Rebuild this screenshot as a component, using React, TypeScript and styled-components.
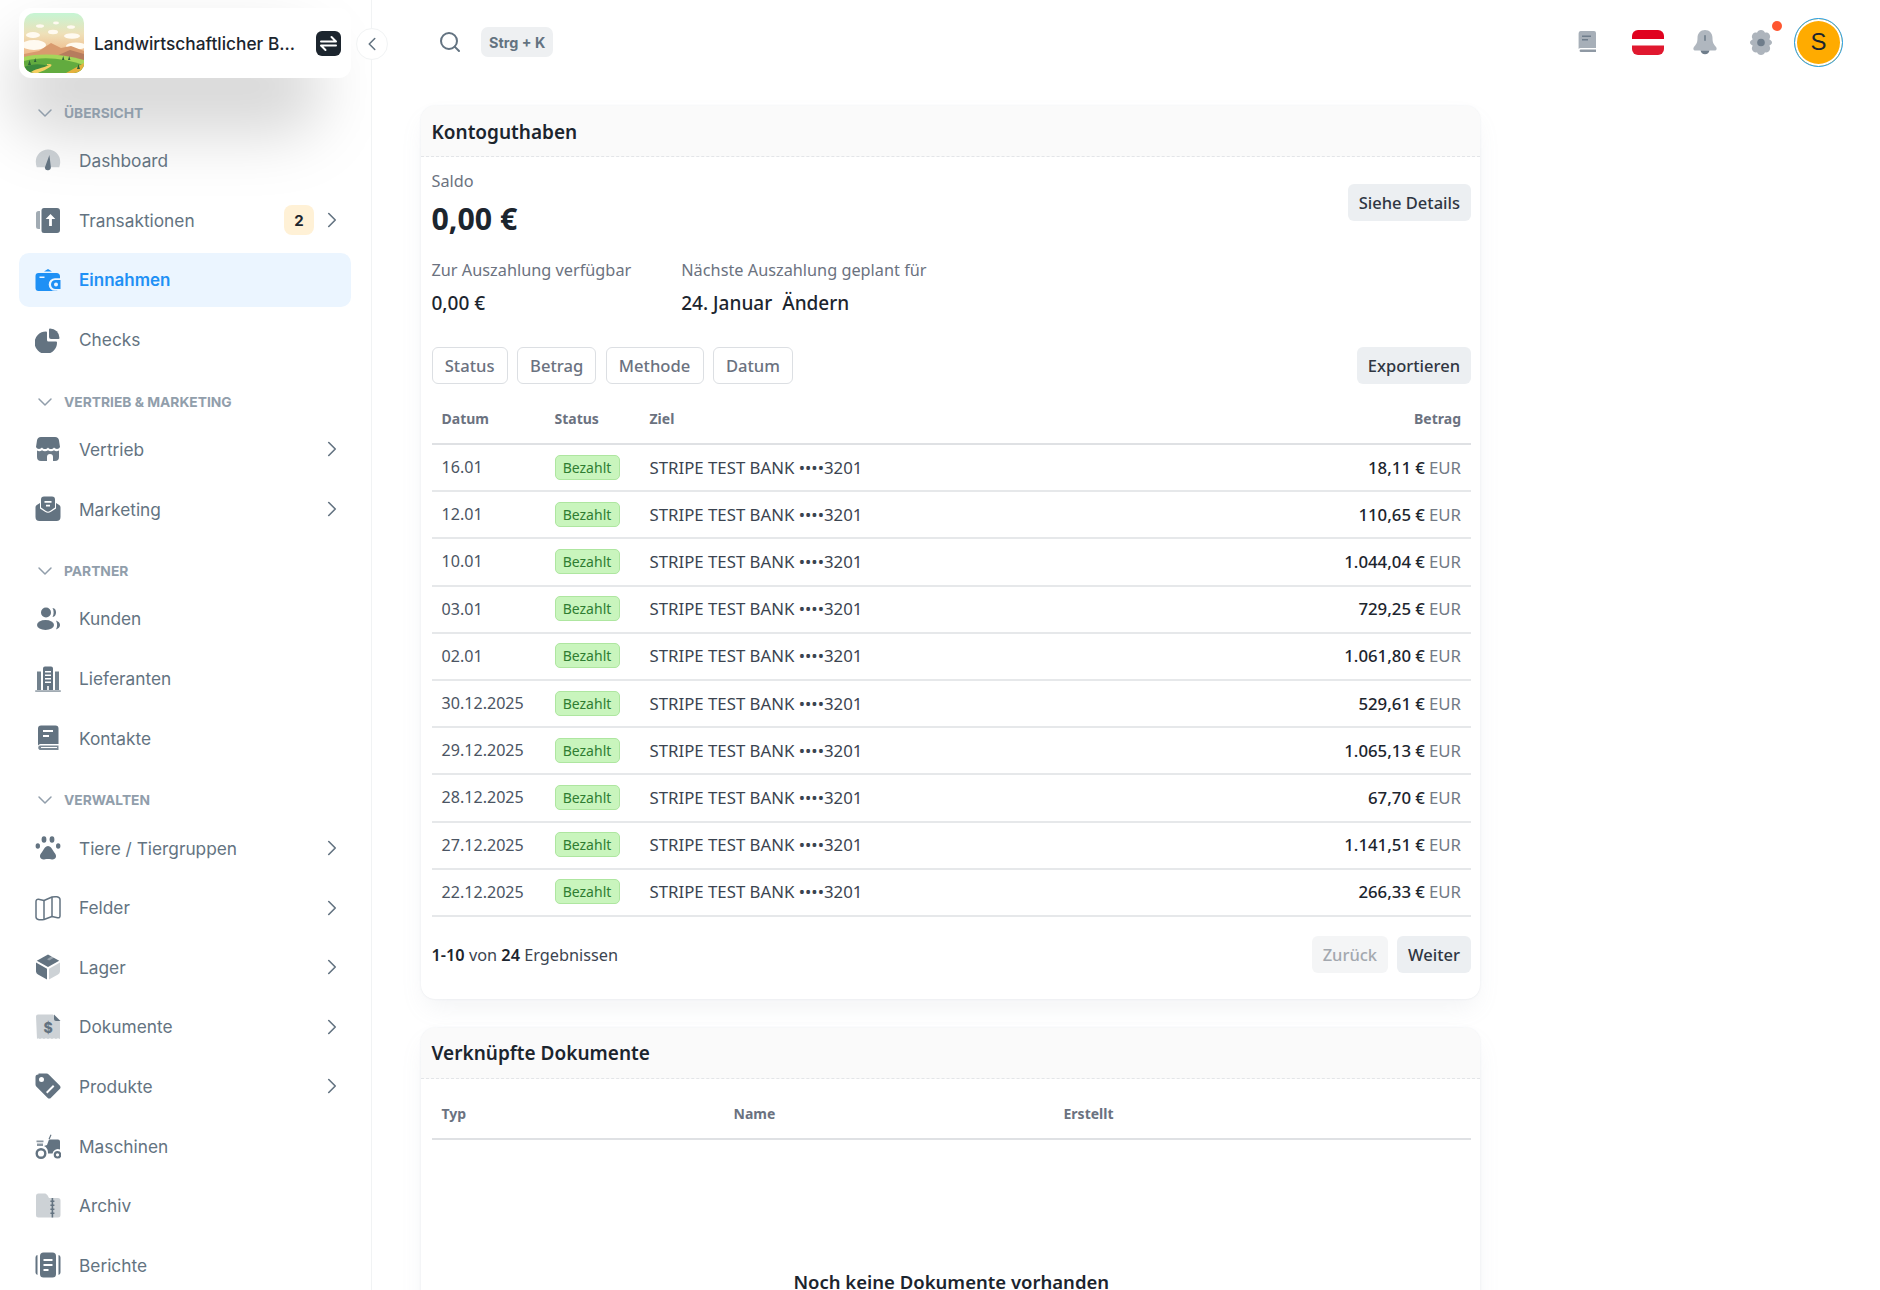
import styled, { createGlobalStyle } from 'styled-components';
import { ChevronDown, ChevronLeft, ChevronRight, Search } from 'lucide-react';
import type { ReactNode } from 'react';

const GlobalStyle = createGlobalStyle`
  html, body {
    margin: 0;
    height: 1290px;
    overflow: hidden;
    background: #fff;
    font-family: "Noto Sans", "Open Sans", sans-serif;
  }
  * { box-sizing: border-box; }
`;

const Shell = styled.div`
  display: flex;
  width: 1880px;
  height: 1290px;
  overflow: hidden;
`;

/* ---------- sidebar ---------- */

const Sidebar = styled.aside`
  position: relative;
  flex: 0 0 372px;
  height: 1290px;
  padding: 8px 20px 0 19px;
  border-right: 1px solid #f1f3f4;
  font-family: Inter, "Noto Sans", sans-serif;
`;
const SidebarClip = styled.div`
  position: absolute;
  inset: 0;
  overflow: hidden;
  pointer-events: none;
`;
const ShadowBlob = styled.div`
  position: absolute;
  left: 12px;
  top: 36px;
  width: 310px;
  height: 100px;
  border-radius: 40px;
  background: rgba(0, 0, 0, 0.15);
  filter: blur(30px);
`;
const BrandCard = styled.div`
  position: relative;
  display: flex;
  align-items: center;
  height: 70px;
  padding: 0 10px 0 5px;
  background: #fff;
  border-radius: 12px;
`;
const BrandName = styled.span`
  flex: 1;
  margin-left: 10px;
  font-size: 17.3px;
  font-weight: 500;
  color: #1c252e;
  white-space: nowrap;
`;
const SwitchButton = styled.span`
  display: flex;
  align-items: center;
  justify-content: center;
  width: 25px;
  height: 25px;
  background: #1c252e;
  border-radius: 6px;
`;
const CollapseButton = styled.button`
  position: absolute;
  left: 356px;
  top: 28px;
  width: 32px;
  height: 32px;
  padding: 0;
  display: flex;
  align-items: center;
  justify-content: center;
  background: #fff;
  border: 1px solid #f1f3f4;
  border-radius: 50%;
  color: #637381;
`;
const NavGroups = styled.nav`
  position: relative;
  display: flex;
  flex-direction: column;
  padding-top: 25px;
`;
const SectionLabel = styled.div`
  display: flex;
  align-items: center;
  height: 20px;
  margin: 0 0 11px 0;
  padding-left: 14px;
  font-size: 13.8px;
  font-weight: 700;
  text-transform: uppercase;
  color: #919eab;
  svg { margin-right: 7px; }
  &:not(:first-child) { margin-top: 19.3px; }
`;
const NavItem = styled.a<{ $active?: boolean }>`
  display: flex;
  align-items: center;
  height: 53.6px;
  margin-bottom: 6px;
  padding: 0 6.5px 0 16px;
  border-radius: 10px;
  font-size: ${(p) => (p.$active ? '17px' : '17.3px')};
  font-weight: ${(p) => (p.$active ? 600 : 400)};
  color: ${(p) => (p.$active ? '#1e90f5' : '#637381')};
  background: ${(p) => (p.$active ? '#ebf5ff' : 'transparent')};
`;
const NavIcon = styled.span`
  display: flex;
  flex: 0 0 26px;
  width: 26px;
  height: 26px;
  margin-right: 18px;
  svg { width: 26px; height: 26px; display: block; }
`;
const NavText = styled.span`
  flex: 1;
`;
const CountBadge = styled.span`
  display: flex;
  align-items: center;
  justify-content: center;
  width: 30px;
  height: 30px;
  margin-right: 4.5px;
  border-radius: 8px;
  background: #fff1d6;
  color: #1c252e;
  font-size: 15px;
  font-weight: 700;
`;

/* ---------- main area ---------- */

const Main = styled.main`
  flex: 1;
  min-width: 0;
`;
const TopBar = styled.header`
  display: flex;
  align-items: center;
  height: 84px;
  padding: 0 37px 0 66px;
`;
const SearchIcon = styled(Search)`
  color: #637381;
`;
const ShortcutKey = styled.span`
  margin-left: 19px;
  display: flex;
  align-items: center;
  height: 30px;
  padding: 0 8px;
  border-radius: 7px;
  background: #eef0f2;
  color: #637381;
  font-family: Inter, sans-serif;
  font-size: 14.4px;
  font-weight: 700;
`;
const TopActions = styled.div`
  margin-left: auto;
  display: flex;
  align-items: center;
`;
const ActionSlot = styled.span<{ $w: number }>`
  position: relative;
  display: flex;
  justify-content: center;
  width: ${(p) => p.$w}px;
`;
const NotifyDot = styled.span`
  position: absolute;
  left: 39px;
  top: -9px;
  width: 10px;
  height: 10px;
  border-radius: 50%;
  background: #ff5630;
`;
const UserAvatar = styled.span`
  display: flex;
  align-items: center;
  justify-content: center;
  width: 49px;
  height: 49px;
  margin-left: 4px;
  border-radius: 50%;
  background: #ffab00;
  border: 1.5px solid #1e9ff0;
  box-shadow: inset 0 0 0 2px #fff;
  font-family: "Liberation Sans", sans-serif;
  font-size: 24px;
  color: #1c252e;
`;
const Content = styled.div`
  width: 1059px;
  margin: 22px 0 0 49px;
  display: flex;
  flex-direction: column;
  gap: 29px;
`;
const Card = styled.section`
  background: #fff;
  border-radius: 14px;
  box-shadow: 0 0 2px rgba(145, 158, 171, 0.22), 0 12px 24px -4px rgba(145, 158, 171, 0.12);
`;
const CardHeader = styled.div`
  display: flex;
  align-items: center;
  height: 51px;
  padding: 1px 10.5px 0;
  background: #fafafa;
  border-bottom: 1px dashed #e3e5e8;
  border-radius: 14px 14px 0 0;
`;
const CardTitle = styled.h2`
  margin: 0;
  font-size: 19px;
  font-weight: 600;
  color: #1c252e;
`;
const CardBody = styled.div<{ $tall?: boolean }>`
  padding: 0 9px 0 10.5px;
  height: ${(p) => (p.$tall ? '400px' : 'auto')};
`;
const BalanceRow = styled.div`
  display: flex;
  justify-content: space-between;
  padding-top: 13px;
`;
const MutedLabel = styled.div`
  font-size: 16.3px;
  line-height: 22px;
  color: #6b7280;
`;
const BalanceValue = styled.div`
  margin-top: 8px;
  font-size: 30.3px;
  line-height: 38px;
  font-weight: 700;
  color: #1c252e;
`;
const SoftButton = styled.button<{ $disabled?: boolean }>`
  height: 37px;
  padding: 0 11px;
  border: 0;
  border-radius: 6px;
  background: ${(p) => (p.$disabled ? '#f4f5f6' : '#eceff2')};
  color: ${(p) => (p.$disabled ? '#a3a8af' : '#2f3642')};
  font-family: inherit;
  font-size: 16.5px;
  font-weight: 500;
`;
const DetailsButton = styled(SoftButton)`
  margin-top: 14px;
`;
const PayoutRow = styled.div`
  display: flex;
  gap: 50px;
  margin-top: 21px;
`;
const PayoutValue = styled.div`
  margin-top: 10px;
  font-size: 19px;
  line-height: 24px;
  font-weight: 500;
  color: #1c252e;
`;
const PayoutDate = styled(PayoutValue)`
  span { margin-left: 10px; }
`;
const FilterBar = styled.div`
  display: flex;
  align-items: center;
  gap: 9.2px;
  margin-top: 32px;
`;
const FilterChip = styled.button`
  height: 37px;
  padding: 0 12.2px;
  background: #fff;
  border: 1px solid #dcdfe3;
  border-radius: 6px;
  color: #6b7280;
  font-family: inherit;
  font-size: 16.6px;
  font-weight: 500;
`;
const ExportButton = styled(SoftButton)`
  margin-left: auto;
`;
const TableHead = styled.div<{ $docs?: boolean }>`
  display: grid;
  grid-template-columns: ${(p) => (p.$docs ? '292px 330px 1fr' : '113px 95px 1fr auto')};
  align-items: center;
  height: 61px;
  padding: 10px 10px 0;
  border-bottom: 2px solid #dfe1e4;
  font-size: 14px;
  font-weight: 700;
  color: #6b7280;
`;
const AmountHead = styled.span`
  text-align: right;
`;
const TableRow = styled.div`
  display: grid;
  grid-template-columns: 113px 95px 1fr auto;
  align-items: center;
  height: 47.2px;
  padding: 0 10px 1px;
  border-bottom: 2px solid #e6e8ea;
  font-size: 16.1px;
  color: #4b5563;
`;
const RowBank = styled.span`
  font-size: 16.8px;
  color: #3b4450;
`;
const PaidChip = styled.span`
  display: flex;
  align-items: center;
  justify-content: center;
  width: 65px;
  height: 25px;
  background: #c9f5bd;
  border: 1px solid #aee6a0;
  border-radius: 5px;
  color: #2f7d32;
  font-size: 14px;
`;
const Amount = styled.span`
  font-size: 16.8px;
  font-weight: 500;
  color: #1c252e;
  small {
    margin-left: 4px;
    font-size: inherit;
    font-weight: 400;
    color: #737a85;
  }
`;
const PagerRow = styled.div`
  display: flex;
  align-items: center;
  justify-content: space-between;
  height: 82px;
  padding-bottom: 6px;
  font-size: 16.3px;
  color: #3b4450;
  b { font-weight: 600; color: #1c252e; }
`;
const PagerButtons = styled.div`
  display: flex;
  gap: 9px;
`;
const EmptyTitle = styled.div`
  margin-top: 129px;
  text-align: center;
  font-size: 18.5px;
  font-weight: 600;
  color: #1c252e;
`;

/* ---------- drawings ---------- */

const INK = '#637381';

function Duo({ children, color = INK }: { children: ReactNode; color?: string }) {
  return (
    <svg viewBox="0 0 26 26" fill={color} aria-hidden="true">
      {children}
    </svg>
  );
}

const icons: Record<string, ReactNode> = {
  dashboard: (
    <Duo>
      <path opacity=".32" d="M13 1.500A12.200 12.200 0 0 0 .8 13.700c0 2 .4 4 1 5.600h22.400c.6-1.600 1-3.600 1-5.600A12.200 12.200 0 0 0 13 1.500z" />
      <path d="M14.400 7l1.400 11.600a3 3 0 0 1-6 1.200z" />
    </Duo>
  ),
  transactions: (
    <Duo>
      <path opacity=".6" d="M1 6.500A2.500 2.500 0 0 1 3.500 4H5v18H3.500A2.500 2.500 0 0 1 1 19.500z" />
      <path fillRule="evenodd" d="M9 1h13a3 3 0 0 1 3 3v19a3 3 0 0 1-3 3H9a2.500 2.500 0 0 1-2.500-2.500v-20A2.500 2.500 0 0 1 9 1zm6.500 6l-4.800 5h3.400v7h2.800v-7h3.400z" />
    </Duo>
  ),
  wallet: (
    <Duo color="#1e90f5">
      <path d="M9 4.500L13 2l4 2.500z" />
      <path fillRule="evenodd" d="M3.500 6h18A3.500 3.500 0 0 1 25 9.500v1.700h-5a6.300 6.300 0 0 0 0 12.600h2.500a3 3 0 0 1-1 .2H3.500A3 3 0 0 1 .5 21V9a3 3 0 0 1 3-3zm1 3.500v1.600h5V9.500z" />
      <path fillRule="evenodd" d="M20.500 13h5v9h-5a4.500 4.500 0 0 1 0-9zm.5 2.500a2 2 0 1 0 0 4 2 2 0 0 0 0-4z" />
    </Duo>
  ),
  checks: (
    <Duo>
      <path d="M11 4.500a1 1 0 0 1 1 1V13a1.500 1.500 0 0 0 1.500 1.500H21a1 1 0 0 1 1 1A11.200 11.200 0 1 1 11 4.500z" />
      <path d="M15 1.500a9.500 9.500 0 0 1 9.500 9.500 1 1 0 0 1-1 1H16a2 2 0 0 1-2-2V2.500a1 1 0 0 1 1-1z" />
    </Duo>
  ),
  store: (
    <Duo>
      <path d="M6 1h14a4 4 0 0 1 4 3.500l1 6.500c-1 2.500-4.500 2.500-6 .5-1.500 2-4.500 2-6 0-1.500 2-4.500 2-6 0-1.500 2-5 2-6-.5l1-6.500A4 4 0 0 1 6 1z" />
      <path d="M2 14.500c1.500.9 3.500.9 5-.2 1.800 1.300 4.200 1.300 6 0 1.800 1.300 4.200 1.300 6 0 1.500 1.100 3.500 1.100 5 .2V21a4 4 0 0 1-4 4h-2v-4a3 3 0 0 0-6 0v4H6a4 4 0 0 1-4-4z" opacity=".95" />
    </Duo>
  ),
  mail: (
    <Duo>
      <path d="M.5 11.500c0-1 .5-2 1.300-2.500L5 7v5.500l5 3.300a5.500 5.500 0 0 0 6 0l5-3.300V7l3.200 2c.8.500 1.300 1.500 1.300 2.500V21a4 4 0 0 1-4 4H4.500a4 4 0 0 1-4-4z" />
      <path fillRule="evenodd" d="M9 .5h8a3 3 0 0 1 3 3v8l-5 3.500a3.500 3.500 0 0 1-4 0L6 11.500v-8a3 3 0 0 1 3-3zM9.500 5v1.800h7V5zm1.500 3.800v1.800h4V8.800z" />
    </Duo>
  ),
  users: (
    <Duo>
      <circle cx="11" cy="6.500" r="5" />
      <ellipse cx="10.500" cy="19" rx="8.500" ry="5" />
      <path d="M17.500 2c2.800.5 3.500 2.200 3.500 4.500s-1 4-3.500 4.500c1.500-2.500 1.500-6.500 0-9z" />
      <path d="M21 14.500c3 1 4 3 4 4.500s-1 3.500-4 4.500c1.500-2.800 1.500-6.200 0-9z" />
    </Duo>
  ),
  building: (
    <Duo>
      <path fillRule="evenodd" d="M10 .5h6a2 2 0 0 1 2 2V24H8V2.500a2 2 0 0 1 2-2zM10 5v1.500h6V5zm0 3.500V10h6V8.500zm0 3.500v1.500h6V12zm0 3.500V17h6v-1.500zM12.200 20v4h1.600v-4z" />
      <path d="M2 5.500h4V24H2zM20 5.500h4V24h-4z" opacity=".9" />
      <path d="M.2 24.500h25.600V25.600H.2z" />
    </Duo>
  ),
  book: (
    <Duo>
      <path fillRule="evenodd" d="M6 .5h14.500A3 3 0 0 1 23.500 3.500V19H6a3 3 0 0 0-3 1.500V3.500A3 3 0 0 1 6 .5zM8 5v2h10V5zm0 5v2h6v-2z" />
      <path d="M6 20.500h17.500V25H6a2.300 2.300 0 0 1-2.800-2.300A2.300 2.300 0 0 1 6 20.500zm0 1.600v1h16v-1z" fillRule="evenodd" opacity=".85" />
    </Duo>
  ),
  paw: (
    <Duo>
      <path d="M13 11c2.500 0 3.800 2.500 5 4.500 1 1.800 3.500 4 3 6.300-.5 2.500-3 3-5 2.500-2-.4-4-.4-6 0-2 .5-4.500 0-5-2.500-.5-2.300 2-4.500 3-6.300 1.200-2 2.500-4.500 5-4.500z" />
      <ellipse cx="9" cy="4.500" rx="2.400" ry="3.200" />
      <ellipse cx="17" cy="4.500" rx="2.400" ry="3.200" />
      <ellipse cx="2.800" cy="11" rx="2.200" ry="2.700" />
      <ellipse cx="23.200" cy="11" rx="2.200" ry="2.700" />
    </Duo>
  ),
  map: (
    <svg viewBox="0 0 26 26" fill="none" stroke={INK} strokeWidth="1.500" strokeLinejoin="round" aria-hidden="true">
      <path d="M1 6.500C1 5 2 4 3.500 4.200L9 5.500 17 2c2.500-.5 8-.8 8 2.500v16.500c0 1.500-1 2-2.500 1.800L17 21.500 9 24.500c-2.500.5-8 .8-8-2.500z" />
      <path d="M9 5.500v19M17 2v19.500" />
    </svg>
  ),
  box: (
    <Duo>
      <path d="M13 .5l11.200 6.200L13 13 1.800 6.700z" />
      <path d="M1 8.500L12 14.700V25.500L3 20.500A3.500 3.500 0 0 1 1 17.500z" />
      <path opacity=".32" d="M25 8.500L14 14.700V25.500L23 20.500A3.500 3.500 0 0 0 25 17.500z" />
      <path fill="#fff" d="M16.200 2.600l1.300-.8 2.400 1.400-5.800 3.400L12 5.200z" opacity=".35" />
    </Duo>
  ),
  receipt: (
    <Duo>
      <path opacity=".32" d="M1 2.500A2 2 0 0 1 3 .5h15l7 7V25l-2-.8-2 .8-2-.8-2 .8-2-.8-2 .8-2-.8-2 .8-2-.8-2 .8-2-.8-1 .8z" />
      <path d="M19 .5L25.500 7H21a2 2 0 0 1-2-2z" />
      <text x="13" y="18.500" textAnchor="middle" fontFamily="Inter, sans-serif" fontSize="14" fontWeight="800">$</text>
    </Duo>
  ),
  tag: (
    <Duo>
      <path fillRule="evenodd" d="M3.500.5h8a3 3 0 0 1 2.200 1l11 11a2.500 2.500 0 0 1 0 3.500l-8.700 8.700a2.500 2.500 0 0 1-3.500 0l-11-11a3 3 0 0 1-1-2.200v-7.500a2.500 2.500 0 0 1 3-2.500zm3 3.500a2.500 2.500 0 1 0 0 5 2.500 2.500 0 0 0 0-5zm11.500 8l-7 7 1.400 1.400 7-7z" />
    </Duo>
  ),
  tractor: (
    <Duo>
      <path fillRule="evenodd" d="M6 15a5.500 5.500 0 1 1 0 11 5.500 5.500 0 0 1 0-11zm0 2.400a3.100 3.100 0 1 0 0 6.200 3.100 3.100 0 0 0 0-6.200z" />
      <path fillRule="evenodd" d="M22.500 18a3.800 3.800 0 1 1 0 7.600 3.800 3.800 0 0 1 0-7.600zm0 2.200a1.600 1.600 0 1 0 0 3.200 1.600 1.600 0 0 0 0-3.200z" />
      <path d="M1.500 7.500h7v1.800h-7zM2 10.500h6V13H2z" opacity=".75" />
      <path d="M14 6.500h9a2 2 0 0 1 2 2v8a5.500 5.500 0 0 0-7.500 4H13c.4-3.500-1.500-6.500-4-7.500l3-1z" />
      <path d="M13.500 6L15.500 1.500l1 .5-1.700 4z" />
    </Duo>
  ),
  folder: (
    <Duo>
      <path opacity=".32" d="M1 3a2.500 2.500 0 0 1 2.500-2.500h6c1.200 0 2 .5 3 1.800L14 5h9a2.500 2.500 0 0 1 2.500 2.500V22a2.500 2.500 0 0 1-2.500 2.500H3.500A2.500 2.500 0 0 1 1 22z" />
      <path d="M16.600 5h1.600v19.500h-1.600z" />
      <path d="M15.400 7.500h4v1.500h-4zM15.400 11.500h4V13h-4zM15.400 15.500h4V17h-4zM15.400 19.500h4V21h-4z" />
    </Duo>
  ),
  report: (
    <Duo>
      <path fillRule="evenodd" d="M8.500.5h9a3.500 3.500 0 0 1 3.500 3.500v18a3.500 3.500 0 0 1-3.500 3.500h-9A3.500 3.500 0 0 1 5 22V4A3.500 3.500 0 0 1 8.500.5zM8.500 7v2h9V7zm0 5v2h9v-2zm0 5v2h5v-2z" />
      <path d="M.5 5.500A2.500 2.500 0 0 1 2.500 3v20a2.500 2.500 0 0 1-2-2.500zM25.500 5.500A2.500 2.500 0 0 0 23.500 3v20a2.500 2.500 0 0 0 2-2.500z" />
    </Duo>
  ),
};

function FarmLogo() {
  return (
    <svg width="60" height="60" viewBox="0 0 60 60" aria-hidden="true">
      <defs>
        <linearGradient id="farm-sky" x1="0" y1="0" x2="0" y2="1">
          <stop offset="0" stopColor="#c6f5d4" />
          <stop offset="0.35" stopColor="#efe0b8" />
          <stop offset="0.65" stopColor="#f0bd8e" />
        </linearGradient>
        <clipPath id="farm-clip">
          <rect width="60" height="60" rx="10" />
        </clipPath>
      </defs>
      <g clipPath="url(#farm-clip)">
        <rect width="60" height="60" fill="url(#farm-sky)" />
        <g fill="#fffaf0">
          <ellipse cx="16" cy="13" rx="4" ry="1.800" />
          <ellipse cx="32" cy="10" rx="3" ry="1.400" />
          <ellipse cx="47" cy="14" rx="4" ry="1.800" />
          <ellipse cx="9" cy="22" rx="7" ry="3" />
          <ellipse cx="48" cy="23" rx="8" ry="2.800" />
          <ellipse cx="29" cy="19" rx="5" ry="2.200" />
          <ellipse cx="10" cy="32" rx="12" ry="5" />
          <ellipse cx="52" cy="33" rx="10" ry="3.500" />
        </g>
        <path d="M0 41L15 38 27 30 37 35 47 33 60 38V48H0z" fill="#d89a6e" />
        <path d="M30 44L46 37 60 41V50H30z" fill="#b67c5e" />
        <path d="M0 44C16 40 38 41 60 47V60H0z" fill="#a5d65a" />
        <path d="M0 48C18 43 40 45 60 52V60H0z" fill="#62ab3f" />
        <path d="M0 60V54C10 50 18 51 24 53 18 56 10 58 8 60z" fill="#3c8a3c" />
        <path d="M6 60C9 56 20 55 25 52 18 51 32 50 26 54 20 58 18 58 14 60z" fill="#f4cf62" />
        <path d="M42 60L60 50V60z" fill="#e5b13e" />
        <g fill="#2c6238">
          <path d="M4 52l1.500-5 1.500 5zM10 49l1.200-4 1.200 4zM38 47l1.200-4 1.200 4zM44 47l1.200-4 1.200 4zM53 56l1.500-5 1.500 5z" />
        </g>
      </g>
    </svg>
  );
}

function SwapGlyph() {
  return (
    <svg width="19" height="19" viewBox="0 0 19 19" fill="none" stroke="#fff" strokeWidth="2" strokeLinecap="round" strokeLinejoin="round" aria-hidden="true">
      <path d="M2 7.500h15L12.500 3" />
      <path d="M17 11.500H2L6.500 16" />
    </svg>
  );
}

function GuideIcon() {
  return (
    <svg width="18" height="22" viewBox="0 0 18 22" aria-hidden="true">
      <path fill="#a7afb8" d="M2.500 0H16a2 2 0 0 1 2 2v15H2.500A2.500 2.500 0 0 0 .6 18V2.500A2.500 2.500 0 0 1 2.500 0z" />
      <path fill="#6f7d8b" d="M4 4.500h9v1.500H4zM4 8h6v1.500H4z" />
      <path fill="#8f99a4" d="M2.500 18.500H18V21H2.500a1.300 1.300 0 0 1 0-2.500z" />
    </svg>
  );
}

function FlagIcon() {
  return (
    <svg width="32" height="25" viewBox="0 0 32 25" aria-hidden="true">
      <defs>
        <clipPath id="flag-clip">
          <rect width="32" height="25" rx="6" />
        </clipPath>
      </defs>
      <g clipPath="url(#flag-clip)">
        <rect width="32" height="9" fill="#e0021f" />
        <rect y="9" width="32" height="6.500" fill="#fff" />
        <rect y="15.500" width="32" height="9.500" fill="#e0182f" />
      </g>
    </svg>
  );
}

function BellIcon() {
  return (
    <svg width="24" height="25" viewBox="0 0 24 25" aria-hidden="true">
      <path fill="#b0b7bf" d="M12 0c4.500 0 7.500 3.500 7.500 8 0 5 1.500 6.500 3.500 9 1.300 1.700.5 3.500-1.500 3.500h-19C.5 20.500-.3 18.700 1 17c2-2.500 3.500-4 3.500-9C4.500 3.500 7.500 0 12 0z" />
      <rect x="11.200" y="5" width="1.600" height="6" rx=".8" fill="#6f7d8b" />
      <path fill="#6f7d8b" d="M7.500 20.500h9a4.600 4.600 0 0 1-9 0z" />
    </svg>
  );
}

function GearIcon() {
  return (
    <svg width="26" height="25" viewBox="0 0 26 25" aria-hidden="true">
      <path fill="#adb4bc" d="M13 0c2 0 3.500 1.200 4 2.800 1.700-.5 3.500 0 4.500 1.700s.8 3.500-.3 4.800c1.600 1 2.800 1.600 2.800 3.200s-1.200 2.200-2.800 3.200c1.100 1.300 1.300 3.100.3 4.800s-2.800 2.200-4.500 1.700C16.500 23.800 15 25 13 25s-3.500-1.200-4-2.800c-1.700.5-3.500 0-4.500-1.700s-.8-3.500.3-4.800C3.200 14.700 2 14.100 2 12.500s1.200-2.200 2.800-3.200C3.700 8 3.500 6.200 4.500 4.500S7.300 2.300 9 2.800C9.500 1.200 11 0 13 0z" />
      <circle cx="13" cy="12.500" r="3.800" fill="#6f7d8b" />
    </svg>
  );
}

/* ---------- data ---------- */

type NavEntry = { label: string; icon: string; arrow?: boolean; active?: boolean; count?: number };

const navGroups: { title: string; items: NavEntry[] }[] = [
  {
    title: 'Übersicht',
    items: [
      { label: 'Dashboard', icon: 'dashboard' },
      { label: 'Transaktionen', icon: 'transactions', arrow: true, count: 2 },
      { label: 'Einnahmen', icon: 'wallet', active: true },
      { label: 'Checks', icon: 'checks' },
    ],
  },
  {
    title: 'Vertrieb & Marketing',
    items: [
      { label: 'Vertrieb', icon: 'store', arrow: true },
      { label: 'Marketing', icon: 'mail', arrow: true },
    ],
  },
  {
    title: 'Partner',
    items: [
      { label: 'Kunden', icon: 'users' },
      { label: 'Lieferanten', icon: 'building' },
      { label: 'Kontakte', icon: 'book' },
    ],
  },
  {
    title: 'Verwalten',
    items: [
      { label: 'Tiere / Tiergruppen', icon: 'paw', arrow: true },
      { label: 'Felder', icon: 'map', arrow: true },
      { label: 'Lager', icon: 'box', arrow: true },
      { label: 'Dokumente', icon: 'receipt', arrow: true },
      { label: 'Produkte', icon: 'tag', arrow: true },
      { label: 'Maschinen', icon: 'tractor' },
      { label: 'Archiv', icon: 'folder' },
      { label: 'Berichte', icon: 'report' },
    ],
  },
];

const payouts = [
  ['16.01', '18,11 €'],
  ['12.01', '110,65 €'],
  ['10.01', '1.044,04 €'],
  ['03.01', '729,25 €'],
  ['02.01', '1.061,80 €'],
  ['30.12.2025', '529,61 €'],
  ['29.12.2025', '1.065,13 €'],
  ['28.12.2025', '67,70 €'],
  ['27.12.2025', '1.141,51 €'],
  ['22.12.2025', '266,33 €'],
];

export default function App() {
  return (
    <Shell>
      <GlobalStyle />
      <Sidebar>
        <SidebarClip>
          <ShadowBlob />
        </SidebarClip>
        <BrandCard>
          <FarmLogo />
          <BrandName>Landwirtschaftlicher B...</BrandName>
          <SwitchButton>
            <SwapGlyph />
          </SwitchButton>
        </BrandCard>
        <CollapseButton aria-label="Seitenleiste einklappen">
          <ChevronLeft size={22} strokeWidth={1.7} />
        </CollapseButton>
        <NavGroups>
          {navGroups.map((group) => [
            <SectionLabel key={group.title}>
              <ChevronDown size={24} strokeWidth={1.5} />
              {group.title}
            </SectionLabel>,
            ...group.items.map((item) => (
              <NavItem key={item.label} $active={item.active}>
                <NavIcon>{icons[item.icon]}</NavIcon>
                <NavText>{item.label}</NavText>
                {item.count ? <CountBadge>{item.count}</CountBadge> : null}
                {item.arrow ? <ChevronRight size={26} strokeWidth={1.5} /> : null}
              </NavItem>
            )),
          ])}
        </NavGroups>
      </Sidebar>

      <Main>
        <TopBar>
          <SearchIcon size={24} strokeWidth={2} />
          <ShortcutKey>Strg + K</ShortcutKey>
          <TopActions>
            <ActionSlot $w={65}>
              <GuideIcon />
            </ActionSlot>
            <ActionSlot $w={57.5}>
              <FlagIcon />
            </ActionSlot>
            <ActionSlot $w={56}>
              <BellIcon />
            </ActionSlot>
            <ActionSlot $w={57.5}>
              <GearIcon />
              <NotifyDot />
            </ActionSlot>
            <UserAvatar>S</UserAvatar>
          </TopActions>
        </TopBar>

        <Content>
          <Card>
            <CardHeader>
              <CardTitle>Kontoguthaben</CardTitle>
            </CardHeader>
            <CardBody>
              <BalanceRow>
                <div>
                  <MutedLabel>Saldo</MutedLabel>
                  <BalanceValue>0,00 €</BalanceValue>
                </div>
                <DetailsButton>Siehe Details</DetailsButton>
              </BalanceRow>
              <PayoutRow>
                <div>
                  <MutedLabel>Zur Auszahlung verfügbar</MutedLabel>
                  <PayoutValue>0,00 €</PayoutValue>
                </div>
                <div>
                  <MutedLabel>Nächste Auszahlung geplant für</MutedLabel>
                  <PayoutDate>
                    24. Januar<span>Ändern</span>
                  </PayoutDate>
                </div>
              </PayoutRow>
              <FilterBar>
                <FilterChip>Status</FilterChip>
                <FilterChip>Betrag</FilterChip>
                <FilterChip>Methode</FilterChip>
                <FilterChip>Datum</FilterChip>
                <ExportButton>Exportieren</ExportButton>
              </FilterBar>
              <TableHead>
                <span>Datum</span>
                <span>Status</span>
                <span>Ziel</span>
                <AmountHead>Betrag</AmountHead>
              </TableHead>
              {payouts.map(([date, amount]) => (
                <TableRow key={date}>
                  <span>{date}</span>
                  <span>
                    <PaidChip>Bezahlt</PaidChip>
                  </span>
                  <RowBank>STRIPE TEST BANK ••••3201</RowBank>
                  <Amount>
                    {amount}
                    <small>EUR</small>
                  </Amount>
                </TableRow>
              ))}
              <PagerRow>
                <span>
                  <b>1-10</b> von <b>24</b> Ergebnissen
                </span>
                <PagerButtons>
                  <SoftButton $disabled>Zurück</SoftButton>
                  <SoftButton>Weiter</SoftButton>
                </PagerButtons>
              </PagerRow>
            </CardBody>
          </Card>

          <Card>
            <CardHeader>
              <CardTitle>Verknüpfte Dokumente</CardTitle>
            </CardHeader>
            <CardBody $tall>
              <TableHead $docs>
                <span>Typ</span>
                <span>Name</span>
                <span>Erstellt</span>
              </TableHead>
              <EmptyTitle>Noch keine Dokumente vorhanden</EmptyTitle>
            </CardBody>
          </Card>
        </Content>
      </Main>
    </Shell>
  );
}
